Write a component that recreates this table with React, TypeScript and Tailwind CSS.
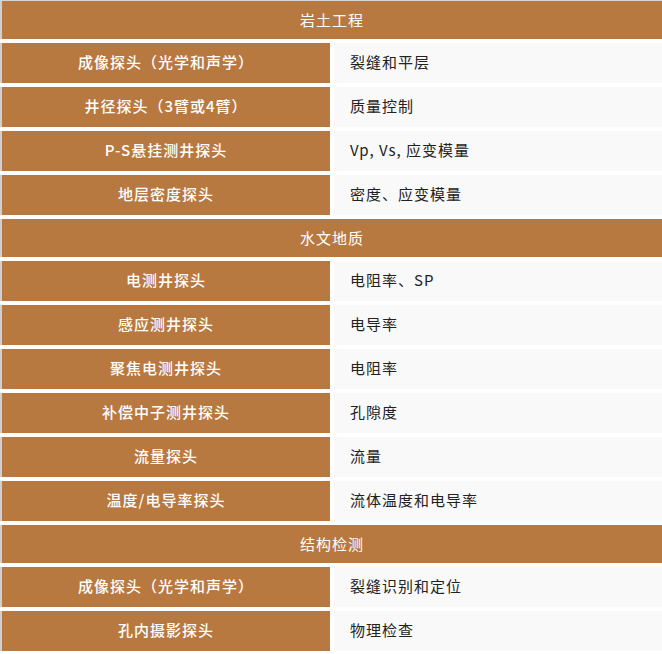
import React from 'react';

type Row = { name: string; use: string };
type Section = { title: string; rows: Row[] };

const sections: Section[] = [
  {
    title: '岩土工程',
    rows: [
      { name: '成像探头（光学和声学）', use: '裂缝和平层' },
      { name: '井径探头（3臂或4臂）', use: '质量控制' },
      { name: 'P-S悬挂测井探头', use: 'Vp, Vs, 应变模量' },
      { name: '地层密度探头', use: '密度、应变模量' },
    ],
  },
  {
    title: '水文地质',
    rows: [
      { name: '电测井探头', use: '电阻率、SP' },
      { name: '感应测井探头', use: '电导率' },
      { name: '聚焦电测井探头', use: '电阻率' },
      { name: '补偿中子测井探头', use: '孔隙度' },
      { name: '流量探头', use: '流量' },
      { name: '温度/电导率探头', use: '流体温度和电导率' },
    ],
  },
  {
    title: '结构检测',
    rows: [
      { name: '成像探头（光学和声学）', use: '裂缝识别和定位' },
      { name: '孔内摄影探头', use: '物理检查' },
    ],
  },
];

export default function App() {
  return (
    <div
      className="w-[662px] h-[654px] bg-white pt-px flex flex-col gap-1 text-[15px] tracking-[1px]"
      style={{ fontFamily: '"Noto Sans CJK SC", "Noto Sans", sans-serif' }}
    >
      {sections.map((s, i) => (
        <React.Fragment key={s.title}>
          <div
            className={`h-[38px] flex items-center justify-center bg-[#b87941] text-white border-l-2 border-[#d0d0d0] ${
              i === 0 ? 'shadow-[0_-1px_0_#d6d6d6]' : ''
            }`}
          >
            {s.title}
          </div>
          {s.rows.map((r) => (
            <div key={s.title + r.name} className="grid grid-cols-[330px_1fr] gap-1 h-10">
              <div className="flex items-center justify-center pb-px bg-[#b87941] text-white font-medium border-l-2 border-[#d0d0d0]">
                {r.name}
              </div>
              <div className="flex items-center pb-px bg-[#f9f9f9] text-[#222] pl-4">{r.use}</div>
            </div>
          ))}
        </React.Fragment>
      ))}
    </div>
  );
}
